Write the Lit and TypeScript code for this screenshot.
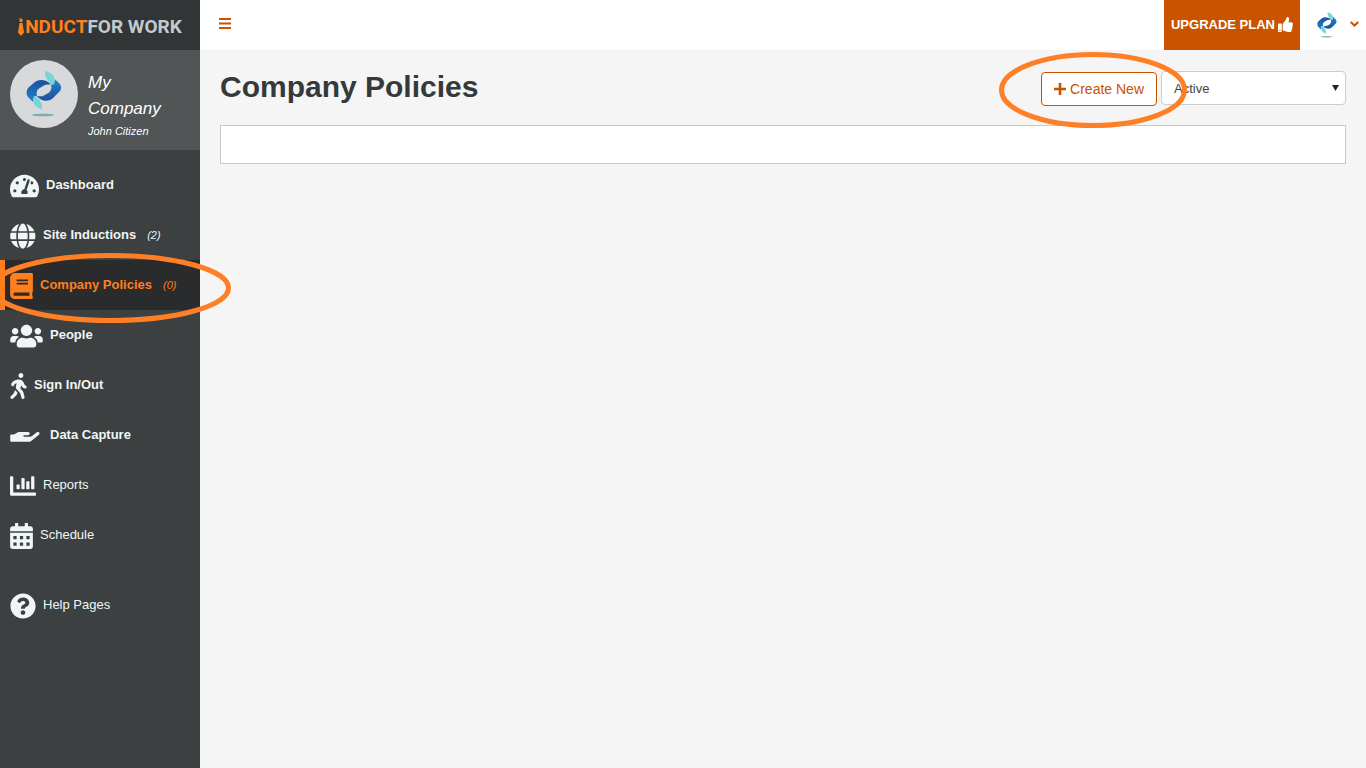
import { LitElement, html, css, svg } from "lit";
import { customElement, property, state } from "lit/decorators.js";
import { classMap } from "lit/directives/class-map.js";

type Icon = { width: number; box: string; path: string };

const ICONS: Record<string, Icon> = {
  dashboard: {
    width: 29,
    box: "0 0 576 512",
    path: "M288 32C128.94 32 0 160.94 0 320c0 52.8 14.25 102.26 39.06 144.8 5.61 9.62 16.3 15.2 27.44 15.2h443c11.14 0 21.83-5.58 27.44-15.2C561.75 422.26 576 372.8 576 320c0-159.06-128.94-288-288-288zm0 64c14.71 0 26.58 10.13 30.32 23.65-1.11 2.26-2.64 4.23-3.45 6.67l-9.22 27.67c-5.13 3.49-10.97 6.01-17.64 6.01-17.67 0-32-14.33-32-32S270.33 96 288 96zM96 384c-17.67 0-32-14.33-32-32s14.33-32 32-32 32 14.33 32 32-14.33 32-32 32zm48-160c-17.67 0-32-14.33-32-32s14.33-32 32-32 32 14.33 32 32-14.33 32-32 32zm246.77-72.41l-61.33 184C343.13 347.33 352 364.54 352 384c0 11.72-3.38 22.55-8.88 32H232.88c-5.5-9.45-8.88-20.28-8.88-32 0-33.94 26.5-61.43 59.9-63.59l61.34-184.01c4.17-12.56 17.73-19.45 30.36-15.17 12.57 4.19 19.35 17.79 15.17 30.36zm14.66 57.2l15.52-46.55c3.47-1.29 7.13-2.23 11.05-2.23 17.67 0 32 14.33 32 32s-14.33 32-32 32c-11.38-.01-20.89-6.28-26.57-15.22zM480 384c-17.67 0-32-14.33-32-32s14.33-32 32-32 32 14.33 32 32-14.33 32-32 32z",
  },
  globe: {
    width: 26,
    box: "0 0 504 512",
    path: "M336.5 160C322 70.7 287.8 8 248 8s-74 62.7-88.5 152h177zM152 256c0 22.2 1.2 43.5 3.3 64h185.3c2.1-20.5 3.3-41.8 3.3-64s-1.2-43.5-3.3-64H155.3c-2.1 20.5-3.3 41.8-3.3 64zm324.7-96c-28.6-67.9-86.5-120.4-158-141.6 24.4 33.8 41.2 84.7 50 141.6h108zM177.2 18.4C105.8 39.6 47.8 92.1 19.3 160h108c8.7-56.9 25.5-107.8 49.9-141.6zM487.4 192H372.7c2.1 21 3.3 42.5 3.3 64s-1.2 43-3.3 64h114.6c5.5-20.5 8.6-41.8 8.6-64s-3.1-43.5-8.5-64zM120 256c0-21.5 1.2-43 3.3-64H8.6C3.2 212.5 0 233.8 0 256s3.2 43.5 8.6 64h114.6c-2-21-3.2-42.5-3.2-64zm39.5 96c14.5 89.3 48.7 152 88.5 152s74-62.7 88.5-152h-177zm159.3 141.6c71.4-21.2 129.4-73.7 158-141.6h-108c-8.8 56.9-25.6 107.8-50 141.6zM19.3 352c28.6 67.9 86.5 120.4 158 141.6-24.4-33.8-41.2-84.7-50-141.6h-108z",
  },
  book: {
    width: 23,
    box: "0 0 448 512",
    path: "M448 360V24c0-13.3-10.7-24-24-24H96C43 0 0 43 0 96v320c0 53 43 96 96 96h328c13.3 0 24-10.7 24-24v-16c0-7.5-3.5-14.3-8.9-18.7-4.2-15.4-4.2-59.3 0-74.7 5.4-4.3 8.9-11.1 8.9-18.6zM128 134c0-3.3 2.7-6 6-6h212c3.3 0 6 2.7 6 6v20c0 3.3-2.7 6-6 6H134c-3.3 0-6-2.7-6-6v-20zm0 64c0-3.3 2.7-6 6-6h212c3.3 0 6 2.7 6 6v20c0 3.3-2.7 6-6 6H134c-3.3 0-6-2.7-6-6v-20zm253.4 250H96c-17.7 0-32-14.3-32-32 0-17.6 14.4-32 32-32h285.4c-1.9 17.1-1.9 46.9 0 64z",
  },
  people: {
    width: 33,
    box: "0 0 640 512",
    path: "M96 224c35.3 0 64-28.7 64-64s-28.7-64-64-64-64 28.7-64 64 28.7 64 64 64zm448 0c35.3 0 64-28.7 64-64s-28.7-64-64-64-64 28.7-64 64 28.7 64 64 64zm32 32h-64c-17.6 0-33.5 7.1-45.1 18.6 40.3 22.1 68.9 62 75.1 109.4h66c17.7 0 32-14.3 32-32v-32c0-35.3-28.7-64-64-64zm-256 0c61.9 0 112-50.1 112-112S381.9 32 320 32 208 82.1 208 144s50.1 112 112 112zm76.8 32h-8.3c-20.8 10-43.9 16-68.5 16s-47.6-6-68.5-16h-8.3C179.6 288 128 339.6 128 403.2V432c0 26.5 21.5 48 48 48h288c26.5 0 48-21.5 48-48v-28.8c0-63.6-51.6-115.2-115.2-115.2zm-223.7-13.4C161.5 263.1 145.6 256 128 256H64c-35.3 0-64 28.7-64 64v32c0 17.7 14.3 32 32 32h65.9c6.3-47.4 34.9-87.3 75.2-109.4z",
  },
  walking: {
    width: 17,
    box: "0 0 320 512",
    path: "M208 96c26.5 0 48-21.5 48-48S234.5 0 208 0s-48 21.5-48 48 21.5 48 48 48zm94.5 149.1l-23.3-11.8-9.7-29.4c-14.7-44.6-55.7-75.8-102.2-75.9-36-.1-55.9 10.1-93.3 25.2-21.6 8.7-39.3 25.2-49.7 46.2L17.6 213c-7.8 15.8-1.5 35 14.2 42.9 15.6 7.9 34.6 1.5 42.5-14.3L81 228c3.5-7 9.3-12.5 16.5-15.4l26.8-10.8-15.2 60.7c-5.2 20.8.4 42.9 14.9 58.8l59.9 65.4c7.2 7.9 12.3 17.4 14.9 27.7l18.3 73.3c4.3 17.1 21.7 27.6 38.8 23.3 17.1-4.3 27.6-21.7 23.3-38.8l-22.2-89c-2.6-10.3-7.7-19.9-14.9-27.7l-45.5-49.7 17.2-68.7 5.5 16.5c5.3 16.1 16.7 29.4 31.7 37l23.3 11.8c15.6 7.9 34.6 1.5 42.5-14.3 7.7-15.7 1.4-35.1-14.3-43zM73.6 385.8c-3.2 8.1-8 15.4-14.2 21.5l-50 50.1c-12.5 12.5-12.5 32.8 0 45.3s32.7 12.5 45.2 0l59.4-59.4c6.1-6.1 10.9-13.4 14.2-21.5l13.5-33.8c-55.3-60.3-38.7-41.8-47.4-53.7l-20.7 51.5z",
  },
  hand: {
    width: 33,
    box: "0 144 640 512",
    path: "M565.3 328.1c-11.8-10.7-30.2-10-42.6 0L430.3 402c-11.3 9.1-25.4 14-40 14H272c-8.8 0-16-7.2-16-16s7.2-16 16-16h78.3c15.9 0 30.7-10.9 33.3-26.6 3.3-20-12.1-37.4-31.6-37.4H192c-27 0-53.1 9.3-74.1 26.3L71.4 370H16c-8.8 0-16 7.2-16 16v110c0 8.8 7.2 16 16 16h356.8c14.5 0 28.6-4.9 40-14L564 377c15.2-12.1 16.4-35.3 1.3-48.9z",
  },
  chart: {
    width: 26,
    box: "0 0 512 512",
    path: "M332.8 320h38.4c6.4 0 12.8-6.4 12.8-12.8V172.8c0-6.4-6.4-12.8-12.8-12.8h-38.4c-6.4 0-12.8 6.4-12.8 12.8v134.4c0 6.4 6.4 12.8 12.8 12.8zm96 0h38.4c6.4 0 12.8-6.4 12.8-12.8V76.8c0-6.4-6.4-12.8-12.8-12.8h-38.4c-6.4 0-12.8 6.4-12.8 12.8v230.4c0 6.4 6.4 12.8 12.8 12.8zm-288 0h38.4c6.4 0 12.8-6.4 12.8-12.8v-70.4c0-6.4-6.4-12.8-12.8-12.8h-38.4c-6.4 0-12.8 6.4-12.8 12.8v70.4c0 6.4 6.4 12.8 12.8 12.8zm96 0h38.4c6.4 0 12.8-6.4 12.8-12.8V108.8c0-6.4-6.4-12.8-12.8-12.8h-38.4c-6.4 0-12.8 6.4-12.8 12.8v198.4c0 6.4 6.4 12.8 12.8 12.8zM496 384H64V80c0-8.84-7.16-16-16-16H16C7.16 64 0 71.16 0 80v336c0 17.67 14.33 32 32 32h464c8.84 0 16-7.16 16-16v-32c0-8.84-7.16-16-16-16z",
  },
  calendar: {
    width: 23,
    box: "0 0 448 512",
    path: "M400 64h-48V12c0-6.6-5.4-12-12-12h-40c-6.6 0-12 5.4-12 12v52H160V12c0-6.6-5.4-12-12-12h-40c-6.6 0-12 5.4-12 12v52H48C21.5 64 0 85.5 0 112v48h448v-48c0-26.5-21.5-48-48-48zM0 464c0 26.5 21.5 48 48 48h352c26.5 0 48-21.5 48-48V192H0zM64 256h64v64H64zM192 256h64v64h-64zM320 256h64v64h-64zM64 384h64v64H64zM192 384h64v64h-64zM320 384h64v64h-64z",
  },
  question: {
    width: 26,
    box: "0 0 512 512",
    path: "M504 256c0 136.997-111.043 248-248 248S8 392.997 8 256C8 119.083 119.043 8 256 8s248 111.083 248 248zM262.655 90c-54.497 0-89.255 22.957-116.549 63.758-3.536 5.286-2.353 12.415 2.715 16.258l34.699 26.31c5.205 3.947 12.621 3.008 16.665-2.122 17.864-22.658 30.113-35.797 57.303-35.797 20.429 0 45.698 13.148 45.698 32.958 0 14.976-12.363 22.667-32.534 33.976C247.128 238.528 216 254.941 216 296v4c0 6.627 5.373 12 12 12h56c6.627 0 12-5.373 12-12v-1.333c0-28.462 83.186-29.647 83.186-106.667 0-58.002-60.165-102-116.531-102zM256 338c-25.365 0-46 20.635-46 46 0 25.364 20.635 46 46 46s46-20.636 46-46c0-25.365-20.635-46-46-46z",
  },
  thumb: {
    width: 15,
    box: "0 0 512 512",
    path: "M104 224H24c-13.255 0-24 10.745-24 24v240c0 13.255 10.745 24 24 24h80c13.255 0 24-10.745 24-24V248c0-13.255-10.745-24-24-24zM64 472c-13.255 0-24-10.745-24-24s10.745-24 24-24 24 10.745 24 24-10.745 24-24 24zM384 81.452c0 42.416-25.97 66.208-33.277 94.548h101.723c33.397 0 59.397 27.746 59.553 58.098.084 17.938-7.546 37.249-19.439 49.197l-.11.11c9.836 23.337 8.237 56.037-9.308 79.469 8.681 25.895-.069 57.704-16.382 74.757 4.298 17.598 2.244 32.575-6.148 44.632C440.202 511.587 389.616 512 346.839 512l-2.845-.001c-48.287-.017-87.806-17.598-119.56-31.725-15.957-7.099-36.821-15.887-52.651-16.178-6.54-.12-11.783-5.457-11.783-11.998v-213.77c0-3.2 1.282-6.271 3.558-8.521 39.614-39.144 56.648-80.587 89.117-113.111 14.804-14.832 20.188-37.236 25.393-58.902C282.515 39.293 291.817 0 312 0c24 0 72 8 72 81.452z",
  },
};

const icon = (name: string, height = 26) => {
  const i = ICONS[name];
  return html`<svg class="icon" width=${i.width} height=${height} viewBox=${i.box} aria-hidden="true">
    ${svg`<path fill="currentColor" fill-rule="evenodd" d=${i.path}></path>`}
  </svg>`;
};

/** The company's emblem: two interlocking ribbons over a soft shadow. */
@customElement("company-emblem")
export class CompanyEmblem extends LitElement {
  static styles = css`
    :host { display: block; }
    svg { display: block; width: 100%; height: 100%; }
  `;
  render() {
    return html`<svg viewBox="0 0 36 46" aria-hidden="true">
      <defs>
        <linearGradient id="a" x1="0" y1="0" x2="0" y2="1">
          <stop offset="0" stop-color="#1b4f9f"></stop><stop offset="1" stop-color="#2484cb"></stop>
        </linearGradient>
        <linearGradient id="b" x1="0" y1="1" x2="0" y2="0">
          <stop offset="0" stop-color="#1b4f9f"></stop><stop offset="1" stop-color="#2484cb"></stop>
        </linearGradient>
      </defs>
      <path fill="url(#a)" d="M25 13.5C20 8 13 8 9 11L3 16C0 19 0 23 2 26L7 31C7 27 8 25.5 11 24.500C10 21 11 19 13 17.500L18 14.500C20 13.500 22 13.300 25 13.500Z"></path>
      <path fill="url(#b)" d="M10.5 25C15 30 21 31 26 28L32 22C36 19 36 15 33 12L28.5 8C29 12 28 13 25 14C26 17.500 25 19.500 23 21.500L18 24.500C16 25.500 14 25.500 10.500 25Z"></path>
      <path fill="#76d5d8" d="M19 0C24 1 28.5 4 28.6 9.5C28.6 12 28 13.5 27 14C22 11 18.5 7 19 0Z"></path>
      <path fill="#76d5d8" d="M16 38.5C11 37 7.5 34 7.2 29.5C7 27 7.5 25.5 8.5 25C13.5 28 17 32 16 38.5Z"></path>
      <ellipse fill="#4a9aa5" cx="17" cy="44" rx="11" ry="1.3" opacity="0.7"></ellipse>
    </svg>`;
  }
}

type Entry = { icon: string; label: string; count?: number; light?: boolean; apart?: boolean };

const ENTRIES: Entry[] = [
  { icon: "dashboard", label: "Dashboard" },
  { icon: "globe", label: "Site Inductions", count: 2 },
  { icon: "book", label: "Company Policies", count: 0 },
  { icon: "people", label: "People" },
  { icon: "walking", label: "Sign In/Out" },
  { icon: "hand", label: "Data Capture" },
  { icon: "chart", label: "Reports", light: true },
  { icon: "calendar", label: "Schedule", light: true },
  { icon: "question", label: "Help Pages", light: true, apart: true },
];

@customElement("side-bar")
export class SideBar extends LitElement {
  @property() current = "";

  static styles = css`
    :host { display: block; background: #3c4040; color: #f0f5f7; }
    .brand { display: flex; align-items: center; justify-content: center; box-sizing: border-box; height: 50px; padding-top: 4px; background: #313536; font: 700 19px/24px Roboto, "Liberation Sans", sans-serif; color: #c3c9cd; text-decoration: none; white-space: pre; }
    .brand .hot { color: #ff7f1f; }
    .tie { flex: none; margin-right: 1px; }
    .profile { display: flex; gap: 10px; padding: 10px; height: 80px; background: #515555; color: #fff; font-style: italic; }
    .avatar { flex: none; display: flex; justify-content: center; width: 68px; height: 68px; border-radius: 50%; background: #d8d9da; }
    .emblem { width: 36px; height: 46px; margin-top: 11px; }
    .who { display: flex; flex-direction: column; padding: 10px 20px 0 0; }
    .company { font-size: 17px; line-height: 26px; }
    .person { font-size: 11px; line-height: 18px; }
    ul { list-style: none; margin: 0; padding: 10px 0 0; }
    li { position: relative; }
    .apart { margin-top: 20px; }
    .entry { display: flex; align-items: flex-start; box-sizing: border-box; height: 50px; padding: 13px 10px 0; color: inherit; text-decoration: none; font-size: 13px; font-weight: 700; line-height: 24px; }
    .light { font-weight: 400; }
    .active { background: #292b2c; color: #ff7f1f; box-shadow: inset 5px 0 #ff7f1f; }
    .icon { flex: none; margin-right: 7px; }
    .count { margin-left: 11px; font-size: 11px; font-weight: 400; font-style: italic; }
    .ring { position: absolute; left: -10px; top: -8px; pointer-events: none; }
  `;

  render() {
    return html`
      <a class="brand" href="#" aria-label="Induct For Work"
        ><svg class="tie" width="6" height="18" viewBox="0 0 6 18" aria-hidden="true">
          <path fill="#ff7f1f" d="M1.5 0L4.5 1V4H1.5zM1.5 5h3L6 14.5 3 18 0 14.5z"></path></svg
        ><span class="hot">NDUCT</span><span>FOR WORK</span></a>
      <div class="profile">
        <div class="avatar"><company-emblem class="emblem"></company-emblem></div>
        <div class="who"><span class="company">My Company</span><span class="person">John Citizen</span></div>
      </div>
      <nav aria-label="Main">
        <ul>
          ${ENTRIES.map((e) => {
            const active = e.label === this.current;
            return html`<li class=${classMap({ apart: !!e.apart })}>
              <a class=${classMap({ entry: true, light: !!e.light, active })} href="#"
                >${icon(e.icon)}<span>${e.label}</span
                >${e.count === undefined ? "" : html`<span class="count">(${e.count})</span>`}</a>
              ${active
                ? html`<svg class="ring" width="244" height="72" aria-hidden="true">
                    <ellipse cx="120.5" cy="36" rx="118" ry="32.5" fill="none" stroke="#ff7f27" stroke-width="5"></ellipse>
                  </svg>`
                : ""}
            </li>`;
          })}
        </ul>
      </nav>`;
  }
}

@customElement("app-root")
export class AppRoot extends LitElement {
  @state() private status = "Active";

  static styles = css`
    :host { display: grid; grid-template-columns: 200px minmax(0, 1fr); min-height: 100vh; background: #f5f5f5; color: #343a3b; font-family: "Liberation Sans", Arial, sans-serif; }
    side-bar { position: relative; z-index: 1; }
    .top { display: flex; align-items: stretch; height: 50px; background: #fff; color: #c85200; }
    button { font-family: inherit; cursor: pointer; }
    .plain { display: flex; align-items: center; border: 0; padding: 0; background: none; color: inherit; }
    .menu { padding: 0 19px 3px; margin-right: auto; }
    .upgrade { display: flex; align-items: center; gap: 3px; padding: 0 7px 2px; background: #ca5300; color: #fff; font-size: 13px; font-weight: 700; text-decoration: none; white-space: nowrap; }
    .account { gap: 13px; padding: 0 7px 0 17px; }
    .emblem { width: 20px; height: 26px; }
    .content { padding: 20px; }
    .heading { display: flex; align-items: flex-start; gap: 4px; margin-bottom: 19px; }
    h1 { flex: 1; margin: 0; font-size: 30px; line-height: 34px; }
    .create { position: relative; z-index: 1; padding-top: 2px; }
    .create button { display: flex; align-items: center; gap: 4px; box-sizing: border-box; height: 34px; padding: 0 12px; border: 1px solid #c85200; border-radius: 4px; background: #fff; color: #c85200; font-size: 14px; white-space: nowrap; }
    .ring { position: absolute; left: -44px; top: -20px; pointer-events: none; }
    .filter { position: relative; width: 185px; padding-top: 1px; }
    select { appearance: none; width: 100%; height: 34px; padding: 0 12px; border: 1px solid #ccc; border-radius: 4px; background: #fff; color: #444; font: 13px "Liberation Sans", Arial, sans-serif; }
    .arrow { position: absolute; right: 7px; top: 15px; pointer-events: none; }
    .list { height: 37px; border: 1px solid #c8c9ca; background: #fff; }
  `;

  render() {
    return html`
      <side-bar current="Company Policies"></side-bar>
      <div>
        <header class="top">
          <button class="plain menu" aria-label="Toggle menu">
            <svg width="12" height="11" viewBox="0 0 12 11" aria-hidden="true"><path fill="currentColor" d="M0 0h12v2H0zM0 4.5h12v2H0zM0 9h12v2H0z"></path></svg>
          </button>
          <a class="upgrade" href="#"><span>UPGRADE PLAN</span>${icon("thumb", 15)}</a>
          <button class="plain account" aria-label="Account">
            <company-emblem class="emblem"></company-emblem>
            <svg width="9" height="8" viewBox="0 0 9 8" aria-hidden="true"><path fill="none" stroke="currentColor" stroke-width="2" d="M.7.9l3.8 3.6L8.3.9"></path></svg>
          </button>
        </header>
        <main class="content">
          <div class="heading">
            <h1>Company Policies</h1>
            <div class="create">
              <button><svg width="12" height="12" viewBox="0 0 12 12" aria-hidden="true"><path fill="currentColor" d="M4.7 0h2.6v4.7H12v2.6H7.3V12H4.7V7.3H0V4.7h4.7z"></path></svg>Create New</button>
              <svg class="ring" width="192" height="80" aria-hidden="true">
                <ellipse cx="96" cy="40" rx="91.5" ry="35.5" fill="none" stroke="#ff7f27" stroke-width="5"></ellipse>
              </svg>
            </div>
            <div class="filter">
              <select aria-label="Status" .value=${this.status} @change=${(e: Event) => (this.status = (e.target as HTMLSelectElement).value)}>
                <option>Active</option>
              </select>
              <svg class="arrow" width="7" height="6" viewBox="0 0 7 6" aria-hidden="true"><path fill="#222" d="M0 0h7L3.5 6z"></path></svg>
            </div>
          </div>
          <section class="list" aria-label="Policies"></section>
        </main>
      </div>`;
  }
}
